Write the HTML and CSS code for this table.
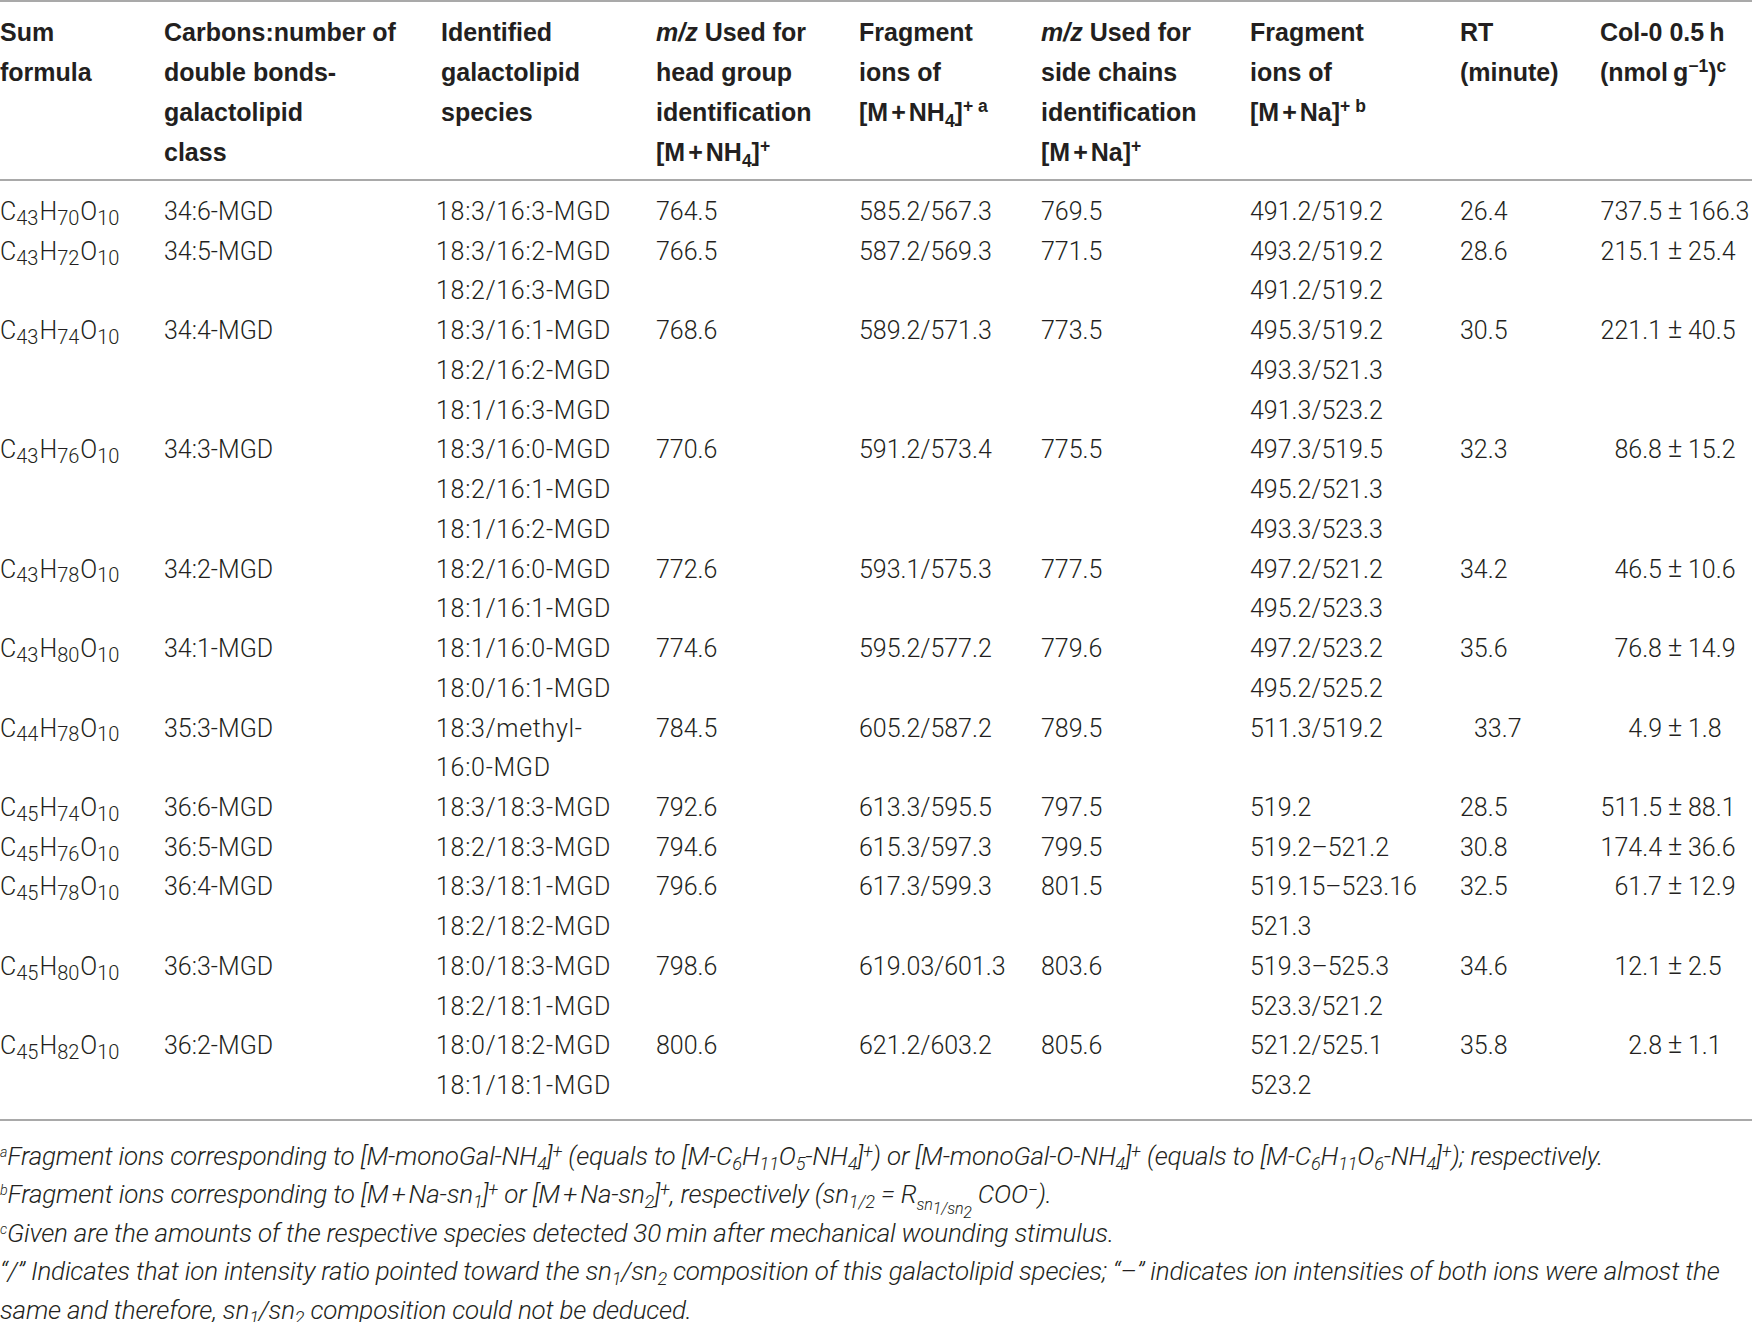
FILE: index.html
```html
<!DOCTYPE html>
<html>
<head>
<meta charset="utf-8">
<link rel="stylesheet" href="styles.css">
</head>
<body>
<div class="page">
<table class="tbl">
<colgroup>
<col class="w1"><col class="w2"><col class="w3"><col class="w4"><col class="w5"><col class="w6"><col class="w7"><col class="w8"><col class="w9">
</colgroup>
<thead>
<tr>
<th>Sum<br>formula</th>
<th>Carbons:number of<br>double bonds-<br>galactolipid<br>class</th>
<th class="h3">Identified<br>galactolipid<br>species</th>
<th><i>m/z</i> Used for<br>head group<br>identification<br>[M<span class="op">+</span>NH<sub>4</sub>]<sup>+</sup></th>
<th>Fragment<br>ions of<br>[M<span class="op">+</span>NH<sub>4</sub>]<sup>+ a</sup></th>
<th><i>m/z</i> Used for<br>side chains<br>identification<br>[M<span class="op">+</span>Na]<sup>+</sup></th>
<th>Fragment<br>ions of<br>[M<span class="op">+</span>Na]<sup>+ b</sup></th>
<th>RT<br>(minute)</th>
<th>Col-0 0.5&#8201;h<br>(nmol&#8201;g<sup>&minus;1</sup>)<sup>c</sup></th>
</tr>
</thead>
<tbody>
<tr><td>C<sub>43</sub>H<sub>70</sub>O<sub>10</sub></td><td>34:6-MGD</td><td>18:3/16:3-MGD</td><td>764.5</td><td>585.2/567.3</td><td>769.5</td><td>491.2/519.2</td><td>26.4</td><td><span class="pm"><span class="l">737.5</span><span class="s">&plusmn;</span><span class="r">166.3</span></span></td></tr>
<tr><td>C<sub>43</sub>H<sub>72</sub>O<sub>10</sub></td><td>34:5-MGD</td><td>18:3/16:2-MGD<br>18:2/16:3-MGD</td><td>766.5</td><td>587.2/569.3</td><td>771.5</td><td>493.2/519.2<br>491.2/519.2</td><td>28.6</td><td><span class="pm"><span class="l">215.1</span><span class="s">&plusmn;</span><span class="r">25.4</span></span></td></tr>
<tr><td>C<sub>43</sub>H<sub>74</sub>O<sub>10</sub></td><td>34:4-MGD</td><td>18:3/16:1-MGD<br>18:2/16:2-MGD<br>18:1/16:3-MGD</td><td>768.6</td><td>589.2/571.3</td><td>773.5</td><td>495.3/519.2<br>493.3/521.3<br>491.3/523.2</td><td>30.5</td><td><span class="pm"><span class="l">221.1</span><span class="s">&plusmn;</span><span class="r">40.5</span></span></td></tr>
<tr><td>C<sub>43</sub>H<sub>76</sub>O<sub>10</sub></td><td>34:3-MGD</td><td>18:3/16:0-MGD<br>18:2/16:1-MGD<br>18:1/16:2-MGD</td><td>770.6</td><td>591.2/573.4</td><td>775.5</td><td>497.3/519.5<br>495.2/521.3<br>493.3/523.3</td><td>32.3</td><td><span class="pm"><span class="l">86.8</span><span class="s">&plusmn;</span><span class="r">15.2</span></span></td></tr>
<tr><td>C<sub>43</sub>H<sub>78</sub>O<sub>10</sub></td><td>34:2-MGD</td><td>18:2/16:0-MGD<br>18:1/16:1-MGD</td><td>772.6</td><td>593.1/575.3</td><td>777.5</td><td>497.2/521.2<br>495.2/523.3</td><td>34.2</td><td><span class="pm"><span class="l">46.5</span><span class="s">&plusmn;</span><span class="r">10.6</span></span></td></tr>
<tr><td>C<sub>43</sub>H<sub>80</sub>O<sub>10</sub></td><td>34:1-MGD</td><td>18:1/16:0-MGD<br>18:0/16:1-MGD</td><td>774.6</td><td>595.2/577.2</td><td>779.6</td><td>497.2/523.2<br>495.2/525.2</td><td>35.6</td><td><span class="pm"><span class="l">76.8</span><span class="s">&plusmn;</span><span class="r">14.9</span></span></td></tr>
<tr><td>C<sub>44</sub>H<sub>78</sub>O<sub>10</sub></td><td>35:3-MGD</td><td>18:3/methyl-<br>16:0-MGD</td><td>784.5</td><td>605.2/587.2</td><td>789.5</td><td>511.3/519.2</td><td><span class="ind">33.7</span></td><td><span class="pm"><span class="l">4.9</span><span class="s">&plusmn;</span><span class="r">1.8</span></span></td></tr>
<tr><td>C<sub>45</sub>H<sub>74</sub>O<sub>10</sub></td><td>36:6-MGD</td><td>18:3/18:3-MGD</td><td>792.6</td><td>613.3/595.5</td><td>797.5</td><td>519.2</td><td>28.5</td><td><span class="pm"><span class="l">511.5</span><span class="s">&plusmn;</span><span class="r">88.1</span></span></td></tr>
<tr><td>C<sub>45</sub>H<sub>76</sub>O<sub>10</sub></td><td>36:5-MGD</td><td>18:2/18:3-MGD</td><td>794.6</td><td>615.3/597.3</td><td>799.5</td><td>519.2&ndash;521.2</td><td>30.8</td><td><span class="pm"><span class="l">174.4</span><span class="s">&plusmn;</span><span class="r">36.6</span></span></td></tr>
<tr><td>C<sub>45</sub>H<sub>78</sub>O<sub>10</sub></td><td>36:4-MGD</td><td>18:3/18:1-MGD<br>18:2/18:2-MGD</td><td>796.6</td><td>617.3/599.3</td><td>801.5</td><td>519.15&ndash;523.16<br>521.3</td><td>32.5</td><td><span class="pm"><span class="l">61.7</span><span class="s">&plusmn;</span><span class="r">12.9</span></span></td></tr>
<tr><td>C<sub>45</sub>H<sub>80</sub>O<sub>10</sub></td><td>36:3-MGD</td><td>18:0/18:3-MGD<br>18:2/18:1-MGD</td><td>798.6</td><td>619.03/601.3</td><td>803.6</td><td>519.3&ndash;525.3<br>523.3/521.2</td><td>34.6</td><td><span class="pm"><span class="l">12.1</span><span class="s">&plusmn;</span><span class="r">2.5</span></span></td></tr>
<tr><td>C<sub>45</sub>H<sub>82</sub>O<sub>10</sub></td><td>36:2-MGD</td><td>18:0/18:2-MGD<br>18:1/18:1-MGD</td><td>800.6</td><td>621.2/603.2</td><td>805.6</td><td>521.2/525.1<br>523.2</td><td>35.8</td><td><span class="pm"><span class="l">2.8</span><span class="s">&plusmn;</span><span class="r">1.1</span></span></td></tr>
</tbody>
</table>
<div class="notes">
<p><sup class="fn">a</sup>Fragment ions corresponding to [M-monoGal-NH<sub>4</sub>]<sup>+</sup> (equals to [M-C<sub>6</sub>H<sub>11</sub>O<sub>5</sub>-NH<sub>4</sub>]<sup>+</sup>) or [M-monoGal-O-NH<sub>4</sub>]<sup>+</sup> (equals to [M-C<sub>6</sub>H<sub>11</sub>O<sub>6</sub>-NH<sub>4</sub>]<sup>+</sup>); respectively.</p>
<p><sup class="fn">b</sup>Fragment ions corresponding to [M<span class="op">+</span>Na-sn<sub>1</sub>]<sup>+</sup> or [M<span class="op">+</span>Na-sn<sub>2</sub>]<sup>+</sup>, respectively (sn<sub>1/2</sub> = R<sub class="rs">sn<sub>1/sn<sub>2</sub></sub></sub> COO<sup>&minus;</sup>).</p>
<p><sup class="fn">c</sup>Given are the amounts of the respective species detected 30&#8201;min after mechanical wounding stimulus.</p>
<p>&ldquo;/&rdquo; Indicates that ion intensity ratio pointed toward the sn<sub>1</sub>/sn<sub>2</sub> composition of this galactolipid species; &ldquo;&ndash;&rdquo; indicates ion intensities of both ions were almost the same and therefore, sn<sub>1</sub>/sn<sub>2</sub> composition could not be deduced.</p>
</div>
</div>
</body>
</html>
```

FILE: styles.css
```css
html, body {
  margin: 0;
  padding: 0;
  background: #ffffff;
}
.page {
  width: 1752px;
  color: #231f20;
  font-family: Roboto, "Liberation Sans", sans-serif;
  font-weight: 300;
}
.tbl {
  width: 1752px;
  border-collapse: collapse;
  table-layout: fixed;
  font-size: 25px;
}
.w1 { width: 164px; }
.w2 { width: 272px; }
.w3 { width: 220px; }
.w4 { width: 203px; }
.w5 { width: 182px; }
.w6 { width: 209px; }
.w7 { width: 210px; }
.w8 { width: 140px; }
.w9 { width: 152px; }
.tbl thead tr {
  border-top: 2px solid #a9a9a9;
  border-bottom: 2px solid #a9a9a9;
}
.tbl th {
  font-family: "Liberation Sans", Arial, sans-serif;
  font-weight: 700;
  text-align: left;
  vertical-align: top;
  line-height: 40px;
  padding: 10px 0 7px 0;
  white-space: nowrap;
}
.tbl th.h3 { padding-left: 5px; }
.tbl td {
  vertical-align: top;
  line-height: 39.73px;
  padding: 0;
  white-space: nowrap;
}
.tbl td:nth-child(3) { letter-spacing: 0.7px; }
.tbl tbody tr:first-child td { padding-top: 11px; }
.tbl tbody tr:last-child td { padding-bottom: 13px; }
.tbl tbody tr:last-child { border-bottom: 2px solid #a9a9a9; }
sub, sup {
  font-size: 0.7em;
  line-height: 0;
}
.tbl td sub {
  vertical-align: -0.24em;
  font-size: 0.8em;
  margin-right: 1px;
}
.op {
  margin: 0 0.12em;
}
.ind { padding-left: 14px; }
.pm { display: flex; }
.pm .l { width: 62px; text-align: right; }
.pm .s { width: 26px; text-align: center; font-size: 1.1em; line-height: 36px; }
.notes {
  margin-top: 16px;
  font-style: italic;
  font-size: 26px;
  line-height: 38.5px;
  letter-spacing: -0.2px;
}
.notes p { margin: 0; }
.notes sub { vertical-align: -0.25em; }
.notes sup { vertical-align: 0.4em; }
.notes sup.fn { font-size: 0.55em; vertical-align: 0.55em; }
.notes sub.rs { font-size: 0.62em; vertical-align: -0.4em; }
.notes sub.rs sub { font-size: 1em; vertical-align: -0.25em; }
```
